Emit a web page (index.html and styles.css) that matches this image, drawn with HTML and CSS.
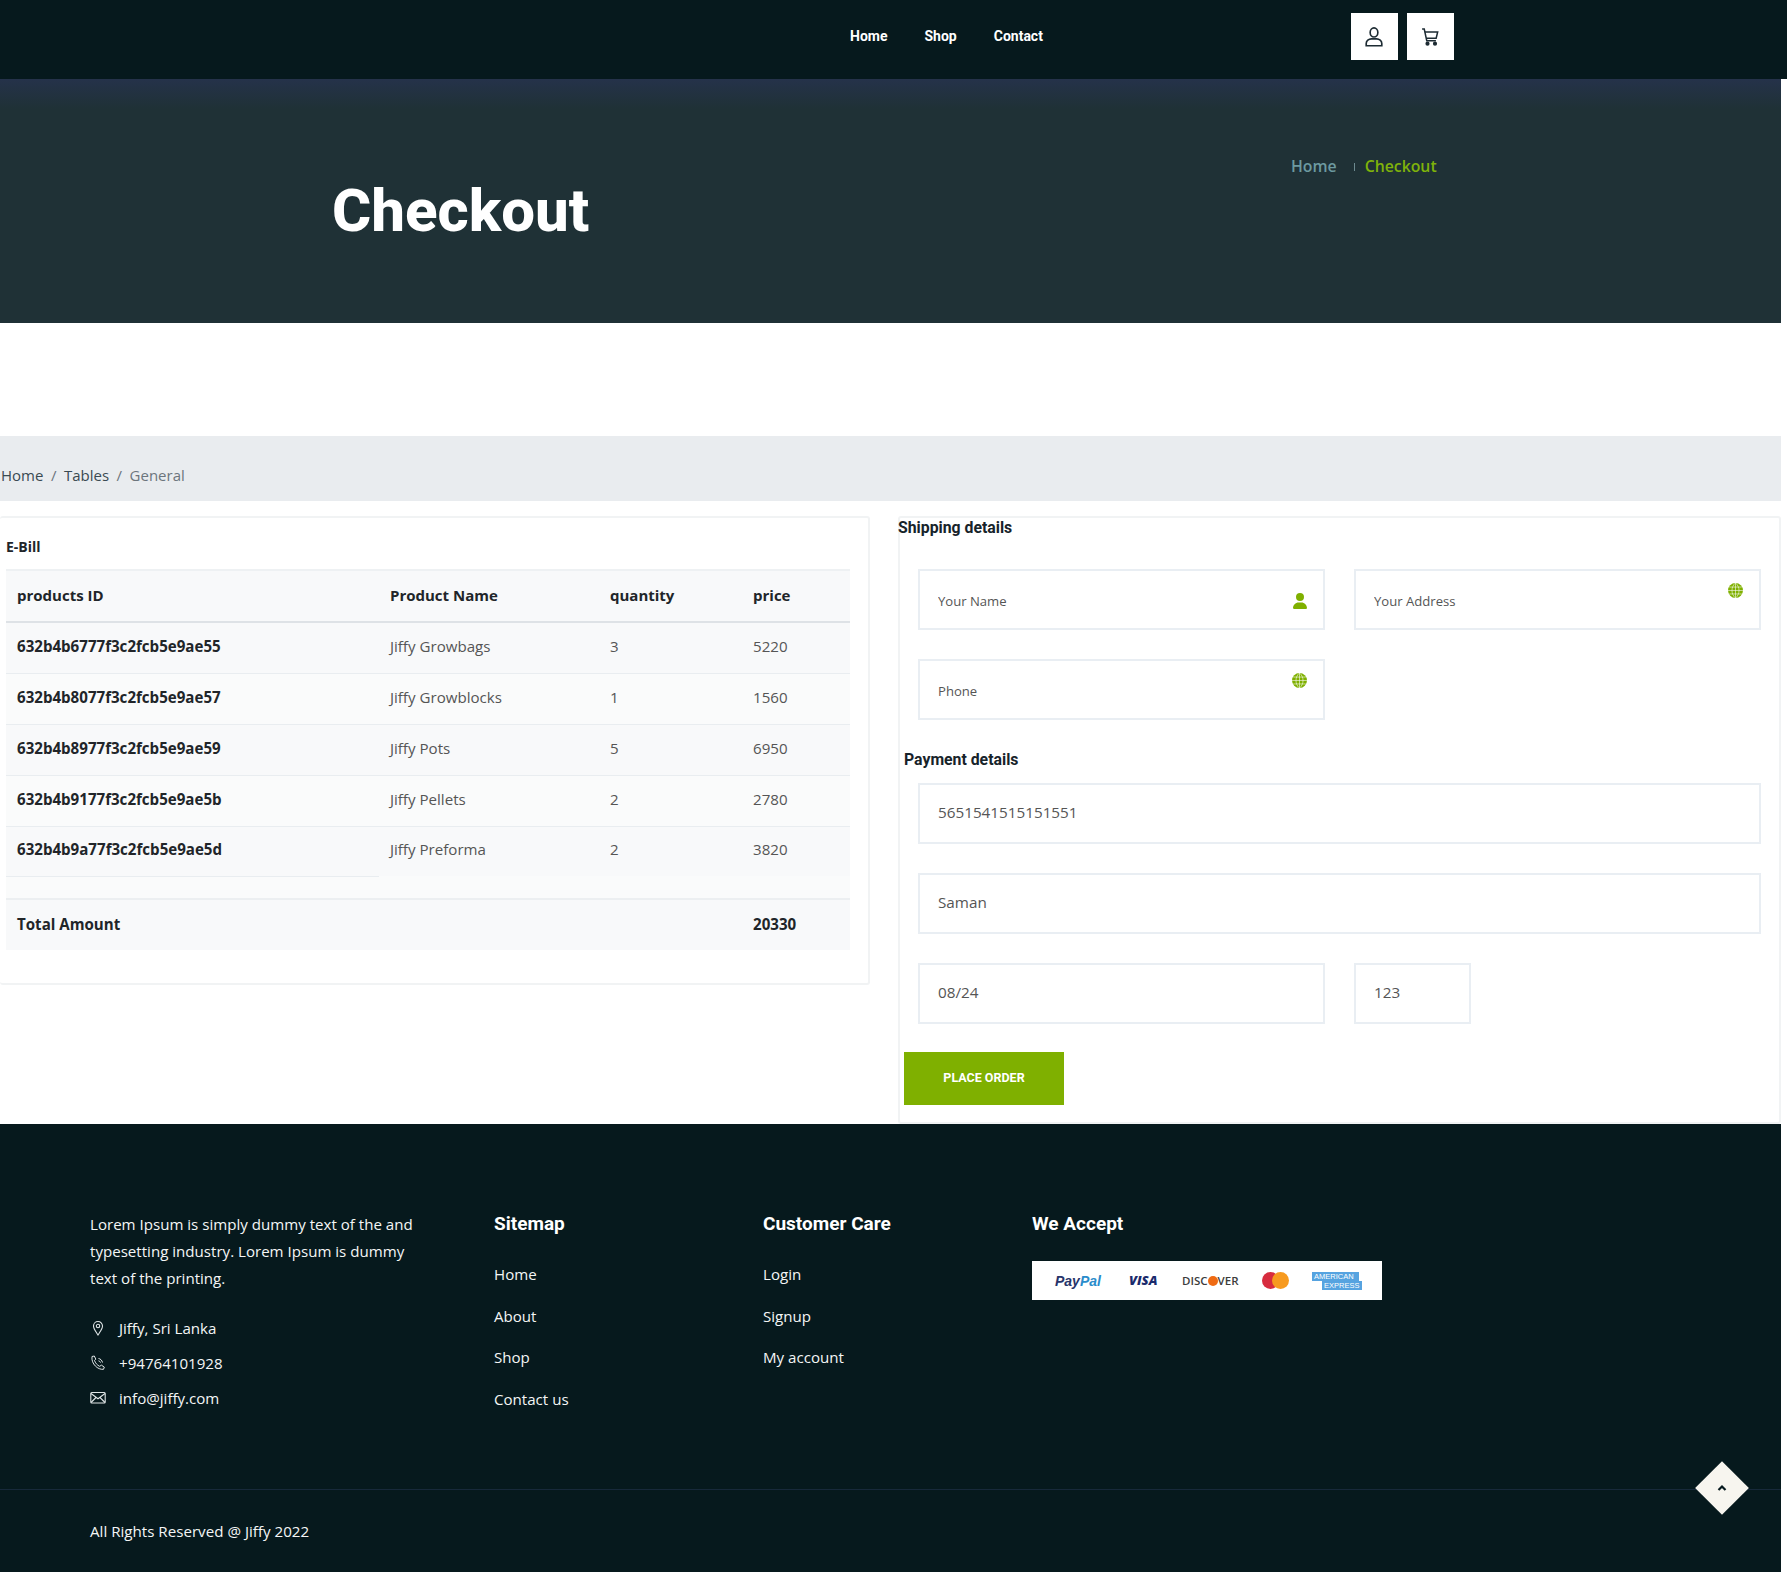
FILE: index.html
```html
<!DOCTYPE html>
<html lang="en">
<head>
<meta charset="utf-8">
<title>Checkout</title>
<link rel="stylesheet" href="styles.css">
</head>
<body>
<div class="page">
  <header class="topbar">
    <nav class="nav">
      <a href="#">Home</a>
      <a href="#">Shop</a>
      <a href="#">Contact</a>
    </nav>
    <div class="top-actions">
      <a class="icon-btn" href="#" aria-label="Account">
        <svg viewBox="0 0 24 24" width="22" height="22" fill="none" stroke="#1d2b33" stroke-width="1.8"><ellipse cx="12" cy="7" rx="4.2" ry="5"/><path d="M3.500 21.500v-2.400c0-3 2.800-5.100 5.600-5.100h5.800c2.800 0 5.600 2.100 5.600 5.100v2.400z"/></svg>
      </a>
      <a class="icon-btn" href="#" aria-label="Cart">
        <svg viewBox="0 0 24 24" width="20" height="20" fill="none" stroke="#1d2b33" stroke-width="1.800"><path d="M2.500 2.500h2.600l3 14h11"/><path d="M5.800 6h15.400l-1.800 7.500H7.400"/><circle cx="9" cy="20" r="1.600" fill="#1d2b33"/><circle cx="18" cy="20" r="1.600" fill="#1d2b33"/></svg>
      </a>
    </div>
  </header>

  <section class="hero">
    <h1>Checkout</h1>
    <div class="hero-crumb"><a href="#">Home</a><i></i><span>Checkout</span></div>
  </section>

  <div class="crumbbar"><a href="#">Home</a><b>/</b><a href="#">Tables</a><b>/</b><span>General</span></div>

  <main class="columns">
    <section class="card bill">
      <h5>E-Bill</h5>
      <table class="bill-table">
        <colgroup><col class="c1"><col class="c2"><col class="c3"><col class="c4"></colgroup>
        <thead>
          <tr><th>products ID</th><th>Product Name</th><th>quantity</th><th>price</th></tr>
        </thead>
        <tbody>
          <tr><th>632b4b6777f3c2fcb5e9ae55</th><td>Jiffy Growbags</td><td>3</td><td>5220</td></tr>
          <tr><th>632b4b8077f3c2fcb5e9ae57</th><td>Jiffy Growblocks</td><td>1</td><td>1560</td></tr>
          <tr><th>632b4b8977f3c2fcb5e9ae59</th><td>Jiffy Pots</td><td>5</td><td>6950</td></tr>
          <tr><th>632b4b9177f3c2fcb5e9ae5b</th><td>Jiffy Pellets</td><td>2</td><td>2780</td></tr>
          <tr class="last"><th>632b4b9a77f3c2fcb5e9ae5d</th><td>Jiffy Preforma</td><td>2</td><td>3820</td></tr>
          <tr class="spacer"><th></th><td colspan="3"></td></tr>
          <tr class="total"><th>Total Amount</th><td></td><td></td><th>20330</th></tr>
        </tbody>
      </table>
    </section>

    <section class="card checkout">
      <h4 class="ship-title">Shipping details</h4>
      <div class="field-grid">
        <div class="field"><input type="text" placeholder="Your Name" aria-label="Your Name">
          <svg class="ico-user" viewBox="0 0 448 512"><path d="M224 256a128 128 0 1 0 0-256 128 128 0 0 0 0 256zm-45.700 48C79.800 304 0 383.800 0 482.300 0 498.700 13.300 512 29.700 512h388.600c16.400 0 29.700-13.300 29.700-29.700C448 383.800 368.200 304 269.700 304z"/></svg>
        </div>
        <div class="field"><input type="text" placeholder="Your Address" aria-label="Your Address">
          <svg class="ico-globe" viewBox="0 0 24 24"><circle cx="12" cy="12" r="12"/><path d="M12 0v24M0 12h24M2 6.500h20M2 17.500h20M12 0c-7.500 6-7.500 18 0 24M12 0c7.500 6 7.500 18 0 24"/></svg>
        </div>
        <div class="field"><input type="text" placeholder="Phone" aria-label="Phone">
          <svg class="ico-globe" viewBox="0 0 24 24"><circle cx="12" cy="12" r="12"/><path d="M12 0v24M0 12h24M2 6.500h20M2 17.500h20M12 0c-7.500 6-7.500 18 0 24M12 0c7.500 6 7.500 18 0 24"/></svg>
        </div>
      </div>
      <h4 class="pay-title">Payment details</h4>
      <div class="pay-stack">
        <input class="val" type="text" value="5651541515151551" aria-label="Card number">
        <input class="val" type="text" value="Saman" aria-label="Name on card">
        <div class="pay-row">
          <input class="val" type="text" value="08/24" aria-label="Expiry">
          <input class="val cvv" type="text" value="123" aria-label="CVV">
        </div>
      </div>
      <button class="order" type="button">PLACE ORDER</button>
    </section>
  </main>

  <footer class="footer">
    <div class="foot-top">
      <div class="foot-about">
        <p>Lorem Ipsum is simply dummy text of the and typesetting industry. Lorem Ipsum is dummy text of the printing.</p>
        <ul class="contact">
          <li>
            <svg viewBox="0 0 16 16" width="16" height="16" fill="none" stroke="#dfe5e6" stroke-width="1.100"><path d="M8 15C5.500 11 3.500 8.800 3.500 6a4.500 4.500 0 0 1 9 0c0 2.800-2 5-4.500 9z"/><circle cx="8" cy="6" r="1.700"/></svg>
            <span>Jiffy, Sri Lanka</span></li>
          <li>
            <svg viewBox="0 0 16 16" width="16" height="16" fill="none" stroke="#dfe5e6" stroke-width="1"><path d="M2 1.500l2.300-.5 1.500 3.200-1.300 1.200c.8 2.500 2.500 4.700 5.300 6l1.500-1.300 3 2-.8 2.200C8 15 1 9 2 1.500z"/><path d="M8.500 3.500c2 .3 3.500 1.800 4 4" /><path d="M8.500 5.800c1 .2 1.700.8 2 1.800"/></svg>
            <span>+94764101928</span></li>
          <li>
            <svg viewBox="0 0 16 16" width="16" height="16" fill="none" stroke="#dfe5e6" stroke-width="1.100"><rect x=".8" y="2.500" width="14.400" height="10.500" rx="1"/><path d="M1 3.500l7 5.300 7-5.300M1 12.500l5-5M15 12.500l-5-5"/></svg>
            <span>info@jiffy.com</span></li>
        </ul>
      </div>
      <div class="foot-col sitemap">
        <h3>Sitemap</h3>
        <a href="#">Home</a><a href="#">About</a><a href="#">Shop</a><a href="#">Contact us</a>
      </div>
      <div class="foot-col care">
        <h3>Customer Care</h3>
        <a href="#">Login</a><a href="#">Signup</a><a href="#">My account</a>
      </div>
      <div class="foot-col accept">
        <h3>We Accept</h3>
        <div class="cards-strip">
          <span class="l-paypal"><em>Pay</em><em>Pal</em></span>
          <span class="l-visa">VISA</span>
          <span class="l-discover">DISC<i></i>VER</span>
          <span class="l-master"><i></i><i></i></span>
          <span class="l-amex"><b>AMERICAN</b><b>EXPRESS</b></span>
        </div>
      </div>
    </div>
    <div class="foot-bottom">All Rights Reserved @ Jiffy 2022</div>
    <a class="to-top" href="#" aria-label="Back to top"><svg viewBox="0 0 12 12" width="12" height="12" fill="none" stroke="#071a1f" stroke-width="2.200"><path d="M2.500 8L6 4.500 9.500 8"/></svg></a>
  </footer>
</div>
</body>
</html>
```

FILE: styles.css
```css
* { box-sizing: border-box; }
html, body { margin: 0; padding: 0; background: #fff; overflow: hidden; }
body { font-family: "Open Sans", "Liberation Sans", sans-serif; color: #212529; font-size: 16px; }
a { color: inherit; text-decoration: none; }
h1, h3, h4, h5, p, ul { margin: 0; padding: 0; }
.page { width: 1781px; height: 1572px; display: flex; flex-direction: column; }

.topbar { height: 79px; width: 1787px; background: #06191d; display: flex; align-items: flex-start; flex: none; }
.nav { display: flex; gap: 37px; margin-left: 850px; padding-top: 27px; font: 700 14px/18px Roboto, sans-serif; color: #fff; }
.top-actions { display: flex; gap: 9px; margin-left: 308px; padding-top: 13px; }
.icon-btn { width: 47px; height: 47px; background: #fff; display: flex; align-items: center; justify-content: center; }

.hero { height: 244px; flex: none; background: linear-gradient(180deg, #25324a 0, #1f3136 30px, #1f3136 100%); display: flex; align-items: flex-start; }
.hero h1 { font: 800 60px/70px Roboto, sans-serif; color: #fff; margin: 97px 0 0 332px; width: 959px; flex: none; }
.hero-crumb { display: flex; align-items: center; margin-top: 76px; font-weight: 600; font-size: 15.800px; line-height: 22px; color: #6d9aa0; }
.hero-crumb i { width: 1px; height: 8px; background: #6d8a90; margin: 2px 10px 0 17px; }
.hero-crumb span { color: #7fb30a; }

.crumbbar { margin-top: 113px; height: 65px; flex: none; background: #e9ecef; padding: 28px 0 0 1px; font-size: 15px; line-height: 22px; color: #3a4a52; display: flex; }
.crumbbar b { font-weight: 400; color: #6c757d; margin: 0 7.500px; }
.crumbbar span { color: #6c757d; }

.columns { display: flex; gap: 28px; flex: 1; padding-top: 15px; align-items: flex-start; }
.card { background: #fff; border: 2px solid #f1f3f4; border-radius: 3px; }
.bill { width: 870px; height: 469px; border-left: 0; padding: 19px 0 0 6px; flex: none; }
.bill h5 { font-size: 14px; line-height: 19px; font-weight: 700; color: #212529; margin-bottom: 13px; }
.bill-table { width: 844px; border-collapse: collapse; table-layout: fixed; font-size: 15.100px; }
.c1 { width: 373px; } .c2 { width: 220px; } .c3 { width: 143px; } .c4 { width: 108px; }
.bill-table th, .bill-table td { padding: 0 11px 3px; text-align: left; height: 51px; border-top: 1px solid #e9edf0; background: #f8f9fa; color: #555; font-weight: 400; }
.bill-table th { font-weight: 700; color: #212529; }
.bill-table thead th { height: 52px; padding-bottom: 3px; border-top: 2px solid #eef1f3; border-bottom: 2px solid #dee2e6; font-size: 15px; }
.bill-table tbody tr:nth-child(even) th, .bill-table tbody tr:nth-child(even) td { background: #fafbfb; }
.bill-table tbody .last th, .bill-table tbody .last td { height: 50px; padding-bottom: 4px; }
.bill-table tbody .spacer th { height: 23px; background: #f9fafb; padding: 0; }
.bill-table tbody .spacer td { height: 23px; background: #fff; border-top: 0; padding: 0; }
.bill-table tbody .total th, .bill-table tbody .total td { background: #f8f9fa; border-top: 2px solid #eceff1; }

.checkout { flex: 1; height: 608px; border-right: 2px solid #f1f3f4; position: relative; }
.ship-title { font: 700 15.800px/20px Roboto, sans-serif; color: #17232a; margin-left: -2px; }
.field-grid { display: grid; grid-template-columns: 407px 407px; column-gap: 29px; row-gap: 29px; padding: 31px 0 0 18px; }
.field { position: relative; }
input { display: block; width: 100%; height: 61px; border: 2px solid #e9eef3; background: #fff; padding: 0 18px; font-family: inherit; outline: 0; color: #555; }
.field input { font-size: 13.100px; padding-top: 2px; }
.field input::placeholder { color: #555; opacity: 1; }
.ico-user { position: absolute; right: 18px; top: 24px; width: 14px; height: 16px; fill: #7fb000; }
.ico-globe { position: absolute; right: 18px; top: 14px; width: 15px; height: 15px; fill: #7fb000; stroke: #fff; stroke-width: .9; }
.ico-globe circle { stroke: none; }
.pay-title { font: 700 15.800px/20px Roboto, sans-serif; color: #17232a; padding: 30px 0 0 4px; }
.pay-stack { display: flex; flex-direction: column; gap: 29px; padding: 13px 0 0 18px; width: 861px; }
.val { font-size: 15.250px; padding-bottom: 4px; }
.pay-row { display: flex; gap: 29px; }
.pay-row .val { width: 407px; }
.pay-row .val.cvv { width: 117px; }
.order { display: block; margin: 28px 0 0 4px; width: 160px; height: 53px; border: 0; background: #7fb000; color: #fff; font: 700 12.500px/16px Roboto, sans-serif; padding: 0 0 2px; }

.footer { height: 448px; flex: none; background: #06191d; color: #f4f6f6; position: relative; display: flex; flex-direction: column; }
.foot-top { height: 366px; padding: 88px 0 0 90px; display: flex; border-bottom: 1px solid #17293a; flex: none; }
.foot-about { width: 404px; flex: none; }
.foot-about p { font-size: 15.100px; line-height: 27px; width: 345px; margin-top: -1px; }
.contact { list-style: none; margin-top: 25px; display: flex; flex-direction: column; gap: 13px; }
.contact li { display: flex; align-items: center; gap: 13px; font-size: 15.100px; line-height: 22px; }
.foot-col { display: flex; flex-direction: column; flex: none; }
.foot-col h3 { font: 700 19px/24px Roboto, sans-serif; color: #fff; margin-bottom: 27px; }
.foot-col a { font-size: 15.100px; line-height: 22px; margin-bottom: 19.500px; }
.sitemap { width: 269px; }
.care { width: 269px; }
.accept { width: 350px; }
.accept h3 { margin-bottom: 25px; }
.cards-strip { width: 350px; height: 39px; background: #fff; display: flex; align-items: center; padding-left: 23px; }
.l-paypal { font: italic 700 14px/1 "Liberation Sans", sans-serif; width: 74px; }
.l-paypal em:first-child { color: #27346a; }
.l-paypal em:last-child { color: #2a8ccb; }
.l-visa { font: italic 800 13px/1 "Open Sans", sans-serif; color: #1a2a6c; width: 53px; }
.l-discover { font: 600 11.500px/1 "Open Sans", sans-serif; color: #3c3c3c; width: 80px; display: flex; align-items: center; }
.l-discover i { width: 10px; height: 10px; border-radius: 50%; background: #ef6a12; }
.l-master { width: 50px; display: flex; }
.l-master i { width: 17px; height: 17px; border-radius: 50%; background: #d72c3e; }
.l-master i:last-child { background: #f79a1f; margin-left: -7px; }
.l-amex { display: flex; flex-direction: column; font: 400 7.500px/9px "Liberation Sans", sans-serif; color: #fff; }
.l-amex b { background: #56a3e0; padding: 0 2px; width: 47px; font-weight: 400; white-space: nowrap; overflow: hidden; }
.l-amex b:last-child { margin-left: 10px; width: 40px; }
.foot-bottom { padding: 30px 0 0 90px; font-size: 15.150px; line-height: 22px; }
.to-top { position: absolute; left: 1703px; top: 345px; width: 38px; height: 38px; background: #f7f5ef; transform: rotate(45deg); display: flex; align-items: center; justify-content: center; }
.to-top svg { transform: rotate(-45deg); }
```
